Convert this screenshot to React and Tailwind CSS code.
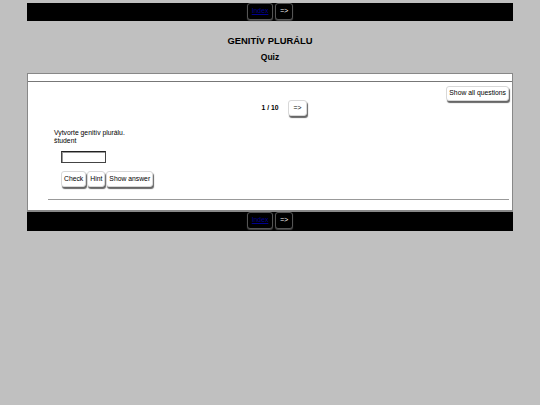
export default function App() {
  const btn =
    "bg-white rounded-[3px] border border-[#d8d8d8] shadow-[1px_2px_1px_#666] text-[6.8px] leading-none text-black px-[2px]";
  const navBtn =
    "rounded-[3px] border border-[#555] bg-black shadow-[0_1px_1px_#444] text-[6.8px] leading-none px-[4px] h-[17px] flex items-center";
  return (
    <div
      className="w-[540px] h-[405px] bg-[#c0c0c0] pt-[3px]"
      style={{ fontFamily: '"Liberation Sans", Arial, sans-serif' }}
    >
      <div className="mx-[27px] w-[486px]">
        <div className="bg-black h-[18px] flex justify-center items-start gap-[2px]">
          <span className={navBtn + " text-[#000090] underline"}>Index</span>
          <span className={navBtn + " text-white"}>=&gt;</span>
        </div>
        <div className="text-center font-bold text-[9.4px] text-black mt-[15px] leading-none">
          GENITÍV PLURÁLU
        </div>
        <div className="text-center font-bold text-[8.5px] text-black mt-[8px] leading-none">
          Quiz
        </div>
        <div className="mt-[11px] bg-white border border-[#888] border-b-2">
          <div className="h-[8px] border-b border-[#777]"></div>
          <div className="flex justify-end pr-[3px] pt-[4px]">
            <button className={btn + " h-[15px]"}>Show all questions</button>
          </div>
          <div className="flex justify-center items-center gap-[9px] -mt-[1px] ml-[29px]">
            <span className="text-[6.8px] font-bold leading-none">1 / 10</span>
            <button className={btn + " h-[16px] px-[5px]"}>=&gt;</button>
          </div>
          <div className="ml-[26px] mt-[13px] text-[6.8px] leading-[8px]">
            <div>Vytvorte genitív plurálu.</div>
            <div>študent</div>
          </div>
          <div className="ml-[33px] mt-[6px]">
            <div className="w-[45px] h-[12px] border border-[#444] border-t-[#222] shadow-[inset_1px_1px_0_#999] bg-white"></div>
          </div>
          <div className="ml-[33px] mt-[8px] flex gap-[1px]">
            <button className={btn + " h-[16px]"}>Check</button>
            <button className={btn + " h-[16px]"}>Hint</button>
            <button className={btn + " h-[16px]"}>Show answer</button>
          </div>
          <div className="ml-[20px] mr-[3px] mt-[12px] border-t border-[#999]"></div>
          <div className="h-[10px]"></div>
        </div>
        <div className="bg-black h-[19px] flex justify-center items-start gap-[2px]">
          <span className={navBtn + " text-[#000090] underline"}>Index</span>
          <span className={navBtn + " text-white"}>=&gt;</span>
        </div>
      </div>
    </div>
  );
}
